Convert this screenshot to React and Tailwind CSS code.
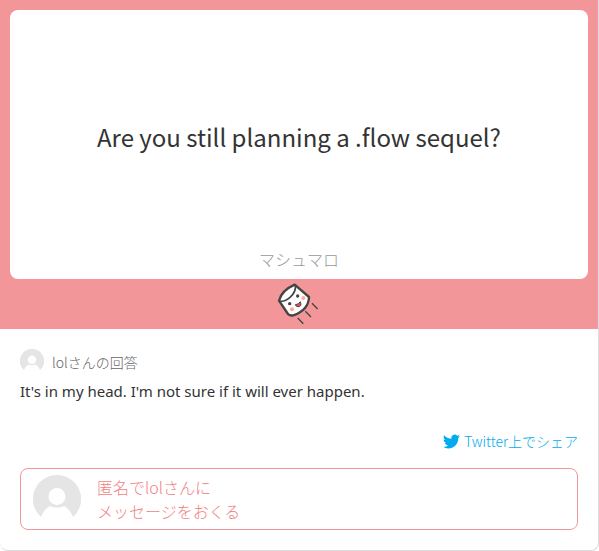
function Avatar({ className }) {
  return (
    <svg viewBox="0 0 48 48" className={className} aria-hidden="true">
      <path
        d="M24 0A24 24 0 0 0 8 42c2-5 5-9 9-11 4 2 10 2 14 0 4 2 7 6 9 11A24 24 0 0 0 24 0z"
        fill="#e5e5e5"
      />
      <circle cx="24" cy="21.500" r="8.500" fill="#fff" />
    </svg>
  );
}

function Marshmallow() {
  return (
    <svg viewBox="0 0 150 144" className="h-12 w-[50px]" fill="none" aria-hidden="true">
      <path
        d="M15 62 Q22 32 62 14 L105 51 Q104 90 58 106 Q48 108 42 102 Z"
        fill="#fff"
        stroke="#444"
        strokeWidth="7"
        strokeLinejoin="round"
      />
      <path d="M15 62 C34 70 68 43 64 15" stroke="#444" strokeWidth="5" strokeLinecap="round" />
      <circle cx="47" cy="71" r="5" fill="#444" />
      <circle cx="71" cy="48" r="5" fill="#444" />
      <circle cx="54" cy="88" r="6" fill="#fbad92" />
      <circle cx="88" cy="54" r="6" fill="#fbad92" />
      <path d="M64 74 Q74 74 79 65 Q85 80 72 80 Q66 80 64 74z" fill="#e8505b" stroke="#444" strokeWidth="3" />
      <path d="M114 70l17 17M94 94l17 17M71 114l17 17" stroke="#444" strokeWidth="4" />
    </svg>
  );
}

function TwitterIcon() {
  return (
    <svg viewBox="0 0 24 24" className="size-[17px]" fill="currentColor" aria-hidden="true">
      <path d="M23.953 4.570a10 10 0 0 1-2.825.775 4.958 4.958 0 0 0 2.163-2.723c-.951.555-2.005.959-3.127 1.184a4.920 4.920 0 0 0-8.384 4.482C7.690 8.095 4.067 6.130 1.640 3.162a4.822 4.822 0 0 0-.666 2.475c0 1.710.870 3.213 2.188 4.096a4.904 4.904 0 0 1-2.228-.616v.060a4.923 4.923 0 0 0 3.946 4.827 4.996 4.996 0 0 1-2.212.085 4.936 4.936 0 0 0 4.604 3.417 9.867 9.867 0 0 1-6.102 2.105c-.390 0-.779-.023-1.170-.067a13.995 13.995 0 0 0 7.557 2.209c9.053 0 13.998-7.496 13.998-13.985 0-.210 0-.420-.015-.630A9.935 9.935 0 0 0 24 4.590z" />
    </svg>
  );
}

export default function App() {
  return (
    <main className="overflow-hidden rounded-b-lg border-r border-b border-[#dcdcdc] bg-white font-['Noto_Sans_CJK_JP',sans-serif]">
      <section className="bg-[#f3969a] px-[10px] pt-[10px]">
        <div className="flex h-[269px] flex-col rounded-lg bg-white text-center">
          <h1 className="flex flex-1 items-center justify-center pt-4 text-2xl leading-9 text-[#333]">
            Are you still planning a .flow sequel?
          </h1>
          <p className="pb-2 text-base leading-6 font-light text-[#999]">マシュマロ</p>
        </div>
        <div className="flex h-[50px] items-center justify-center">
          <Marshmallow />
        </div>
      </section>

      <section className="px-5 pt-5 pb-5">
        <div className="flex items-center gap-2">
          <Avatar className="size-6" />
          <span className="pt-0.5 text-sm leading-5 font-light text-[#666]">lolさんの回答</span>
        </div>
        <p className="mt-1.5 font-['Noto_Sans','Noto_Sans_CJK_JP',sans-serif] text-[15px] leading-6 text-[#333]">
          It's in my head. I'm not sure if it will ever happen.
        </p>

        <div className="mt-7 flex justify-end">
          <a href="#share" className="flex items-center gap-1 text-sm leading-5 font-light text-[#00acee]">
            <TwitterIcon />
            Twitter上でシェア
          </a>
        </div>

        <button
          type="button"
          className="mt-[17px] flex w-full items-center gap-4 rounded-lg border border-[#f3969a] px-3 py-1.5 text-left text-base leading-6 font-light text-[#f17f84]"
        >
          <Avatar className="size-12" />
          <span>
            匿名でlolさんに
            <br />
            メッセージをおくる
          </span>
        </button>
      </section>
    </main>
  );
}
